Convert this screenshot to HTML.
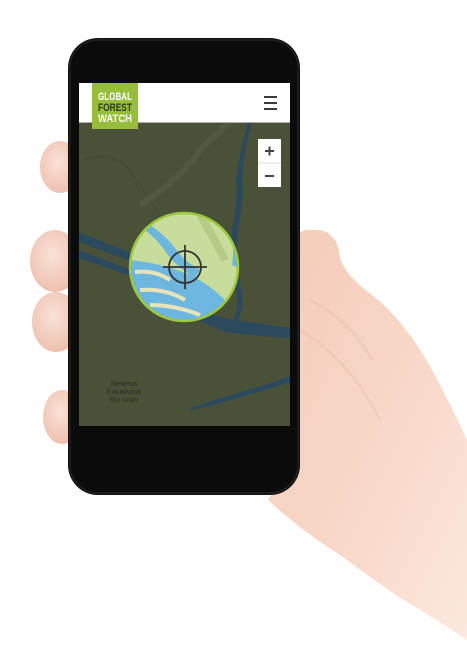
<!DOCTYPE html>
<html><head><style>
html,body{margin:0;padding:0;background:#fff;}
body{width:467px;height:657px;position:relative;overflow:hidden;font-family:"Liberation Sans",sans-serif;}
svg{position:absolute;left:0;top:0}
</style></head><body>
<svg width="467" height="657" viewBox="0 0 467 657">
<defs>
<radialGradient id="fg" cx="0.45" cy="0.4" r="0.7"><stop offset="0" stop-color="#fae2d6"/><stop offset="1" stop-color="#ecbba8"/></radialGradient>
<linearGradient id="hand" x1="0" y1="0" x2="1" y2="1"><stop offset="0" stop-color="#f4cbb8"/><stop offset="0.6" stop-color="#f8d9ca"/><stop offset="1" stop-color="#fce8de"/></linearGradient>
<clipPath id="circ"><circle cx="184" cy="267" r="55"/></clipPath>
<clipPath id="scr"><rect x="79" y="83" width="211" height="343"/></clipPath>
</defs>
<path d="M290 240 Q298 228 318 230 Q338 232 340 258 Q345 275 372 295 Q410 325 440 385 Q458 420 467 440 L467 640 Q430 615 400 598 Q360 570 340 555 Q300 530 268 500 L280 480 Z" fill="url(#hand)"/>
<path d="M300 330 Q350 360 380 420 M310 300 Q350 320 372 360" stroke="#eabca9" stroke-width="2" fill="none" opacity="0.5"/>
<ellipse cx="60" cy="167" rx="20" ry="26" fill="url(#fg)"/>
<ellipse cx="55" cy="261" rx="25" ry="31" fill="url(#fg)"/>
<ellipse cx="56" cy="322" rx="24" ry="30" fill="url(#fg)"/>
<ellipse cx="62" cy="417" rx="19" ry="27" fill="url(#fg)"/>
<rect x="68" y="38" width="232" height="457" rx="30" fill="#111"/>
<rect x="70" y="40" width="228" height="453" rx="28" fill="#0b0b0b" stroke="#2a2a2a" stroke-width="1"/>
<g clip-path="url(#scr)">
<rect x="79" y="83" width="211" height="343" fill="#4a5139"/>
<path d="M79 232 Q110 245 140 256 L140 264 Q110 254 79 242 Z" fill="#2c4a5e"/>
<path d="M79 250 Q110 262 140 273 L140 279 Q110 269 79 258Z" fill="#2c4a5e"/>
<path d="M190 305 Q220 320 250 322 Q270 325 290 328 L290 338 Q255 336 225 332 Q200 322 185 312 Z" fill="#2c4a5e"/>
<path d="M248 122 Q240 150 236 180 Q238 200 232 230 Q230 260 236 290 Q240 310 230 325 L236 325 Q246 305 240 285 Q236 255 238 230 Q244 200 242 178 Q244 150 252 122Z" fill="#2c4a5e"/>
<path d="M190 408 Q230 395 265 385 Q280 380 290 376 L290 382 Q260 392 230 400 Q210 407 190 410Z" fill="#2c4a5e"/>
<path d="M85 160 Q110 150 130 170 Q150 200 160 215" stroke="#3a3e30" stroke-width="1" fill="none" stroke-dasharray="2 2"/>
<path d="M140 205 Q180 180 200 150 Q220 130 230 122" stroke="#566047" stroke-width="6" fill="none" opacity="0.6"/>
<g clip-path="url(#circ)">
<rect x="125" y="205" width="120" height="125" fill="#c8dc9c"/>
<path d="M125 260 Q160 262 190 275 Q210 285 225 300 Q240 320 245 330 L125 330Z" fill="#6cb6e0"/>
<path d="M150 225 Q165 235 175 248 Q185 262 200 270 L195 278 Q178 268 168 255 Q158 240 145 230Z" fill="#6cb6e0"/>
<path d="M230 230 Q235 245 232 265 L238 268 Q242 245 236 228Z" fill="#6cb6e0"/>
<path d="M135 272 Q155 270 170 280 M140 290 Q165 288 185 300 M150 305 Q175 305 200 315 M140 318 Q160 316 180 325" stroke="#e8e4b8" stroke-width="4" fill="none"/>
<path d="M200 215 Q215 240 225 260" stroke="#b4cc88" stroke-width="8" fill="none"/>
</g>
<circle cx="184" cy="267" r="54" fill="none" stroke="#9cc93a" stroke-width="2.5"/>
<circle cx="185" cy="267" r="16" fill="none" stroke="#333" stroke-width="1.8"/>
<path d="M163 267 H207 M185 245 V289" stroke="#333" stroke-width="1.8"/>
<text x="124" y="386" font-size="7" fill="#2a2e22" text-anchor="middle">Reserva</text>
<text x="124" y="394" font-size="7" fill="#2a2e22" text-anchor="middle">Extrativista</text>
<text x="124" y="402" font-size="7" fill="#2a2e22" text-anchor="middle">Rio Unini</text>
<rect x="258" y="139" width="23" height="48" fill="#fff"/>
<line x1="258" y1="163" x2="281" y2="163" stroke="#ddd"/>
<path d="M265 151 H274 M269.5 146.5 V155.5 M265 176 H274" stroke="#444" stroke-width="2"/>
<rect x="79" y="83" width="211" height="39" fill="#fff"/>
<rect x="79" y="122" width="211" height="1" fill="#aaa"/>
<rect x="92" y="83" width="46" height="46" fill="#97bd3d"/>
<text x="115" y="100" font-size="11" font-weight="bold" fill="#fff" text-anchor="middle" textLength="34" lengthAdjust="spacingAndGlyphs">GLOBAL</text>
<text x="115" y="111" font-size="11" font-weight="bold" fill="#2d3a12" text-anchor="middle" textLength="34" lengthAdjust="spacingAndGlyphs">FOREST</text>
<text x="115" y="122" font-size="11" font-weight="bold" fill="#fff" text-anchor="middle" textLength="34" lengthAdjust="spacingAndGlyphs">WATCH</text>
<path d="M264 97 H277 M264 103 H277 M264 109 H277" stroke="#222" stroke-width="1.8"/>
</g>
</svg>
</body></html>
